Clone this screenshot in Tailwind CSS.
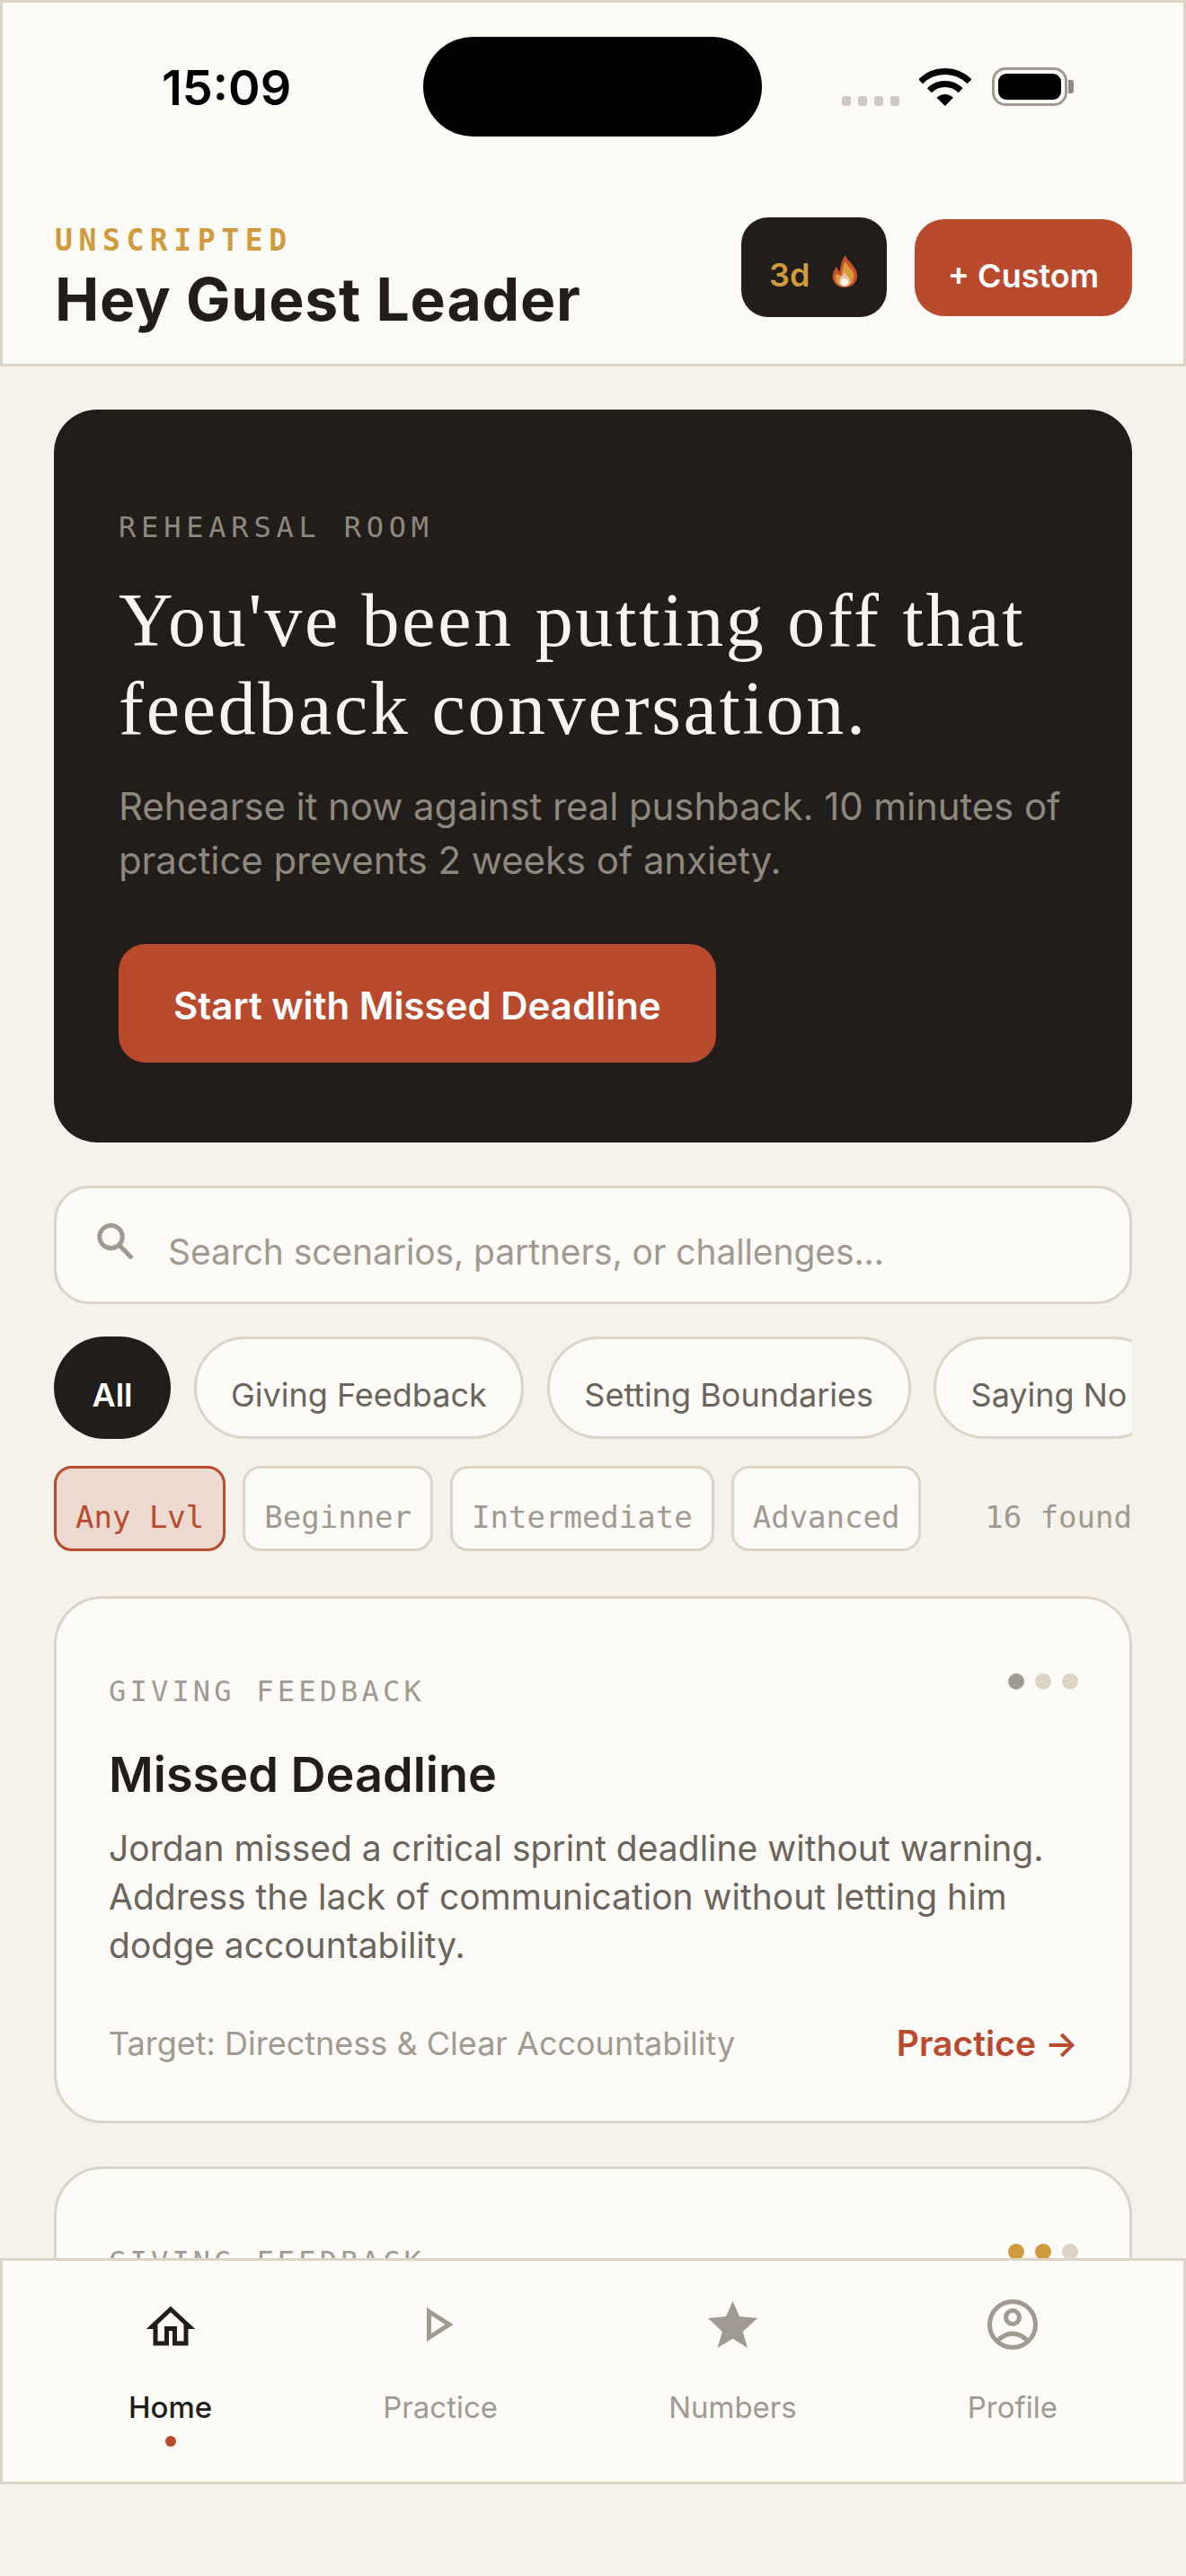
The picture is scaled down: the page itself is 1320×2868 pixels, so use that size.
<!doctype html>
<html lang="en">
<head>
    <meta charset="UTF-8">
    <meta name="viewport" content="width=device-width, initial-scale=1.0">
    <script src="https://cdn.jsdelivr.net/npm/@tailwindcss/browser@4"></script>
    <title>Unscripted</title>
</head>
<body class="bg-[#f5f1eb] font-['Inter',sans-serif]">
<div class="h-[2868px] flex flex-col overflow-hidden">
    <!-- status bar + greeting -->
    <header class="h-[408px] shrink-0 bg-[#fcfbf7] border-[3px] border-[#ddd3c7]">
        <div class="flex items-center pt-[38px] h-[149px]">
            <div class="ml-[177px] w-[291px] text-[54px] font-semibold text-black leading-none pt-[2px]">15:09</div>
            <div class="w-[377px] h-[111px] rounded-full bg-black"></div>
            <div class="ml-[89px] flex items-center">
                <div class="flex gap-[8px] self-end">
                    <span class="w-[10px] h-[11px] rounded-[3px] bg-[#cfc9c0]"></span>
                    <span class="w-[10px] h-[11px] rounded-[3px] bg-[#cfc9c0]"></span>
                    <span class="w-[10px] h-[11px] rounded-[3px] bg-[#cfc9c0]"></span>
                    <span class="w-[10px] h-[11px] rounded-[3px] bg-[#cfc9c0]"></span>
                </div>
                <svg class="ml-[22px]" width="58" height="42" viewBox="0 0 58 42" fill="none" stroke="#000" stroke-width="7">
                    <path d="M1.5 14.8A38.5 38.5 0 0 1 56 14.8"/>
                    <path d="M11.4 24.7A24.5 24.5 0 0 1 46.1 24.7"/>
                    <path d="M28.75 42L19.5 32.8A13 13 0 0 1 38 32.8Z" fill="#000" stroke="none"/>
                </svg>
                <div class="ml-[23px] flex items-center">
                    <div class="w-[84px] h-[43px] rounded-[15px] border-[3px] border-[#a09a90] p-[4px]">
                        <div class="w-full h-full rounded-[9px] bg-black"></div>
                    </div>
                    <div class="ml-[1px] w-[6px] h-[15px] rounded-r-[3px] bg-[#8f8a81]"></div>
                </div>
            </div>
        </div>
        <div class="flex items-start justify-between pl-[58px] pr-[57px] mt-[88px]">
            <div class="pt-[8px]">
                <div class="font-['DejaVu_Sans_Mono',monospace] font-bold text-[33px] leading-[40px] tracking-[6.6px] text-[#cf9b3d]">UNSCRIPTED</div>
                <h1 class="mt-[5px] text-[66px] leading-[80px] font-bold tracking-[0.8px] text-[#211d1a]">Hey Guest Leader</h1>
            </div>
            <div class="flex items-start gap-[31px]">
                <div class="mt-[2px] w-[162px] h-[111px] rounded-[30px] bg-[#211d1a] flex items-center pl-[31px] pt-[16px]">
                    <span class="text-[36px] font-semibold text-[#cf9b3d] leading-none">3d</span>
                    <svg class="ml-[25px] mt-[-8px]" width="29" height="36" viewBox="0 0 29 36">
                        <path d="M15 0C17 6 22 8 25 14C28 19 29 23 27 28C25 33 20 36 14 36C8 36 3 33 1 27C0 22 2 17 5 13C6 16 7 17 9 18C9 11 11 5 15 0Z" fill="#c9502b"/>
                        <path d="M15 7C17 12 22 15 24 20C25 25 23 30 20 33C17 35 11 35 8 33C4 30 3 25 5 21C7 22 9 23 11 23C11 17 12 12 15 7Z" fill="#d99a3c"/>
                        <path d="M14 19C16 22 20 25 20 29C20 33 17 35 14 35C11 35 8 33 8 29C8 25 12 23 14 19Z" fill="#eec2a8"/>
                        <circle cx="14" cy="30" r="4" fill="#fdf6ea"/>
                    </svg>
                </div>
                <button class="mt-[4px] w-[242px] h-[108px] rounded-[33px] bg-[#b94a2e] text-white text-[36px] font-semibold pt-[18px]">+ Custom</button>
            </div>
        </div>
    </header>

    <main class="flex-1 min-h-0 overflow-hidden px-[60px] pt-[48px]">
        <!-- rehearsal card -->
        <section class="h-[816px] rounded-[48px] bg-[#211d1a] px-[72px] pt-[109px]">
            <div class="font-['DejaVu_Sans_Mono',monospace] text-[32px] leading-[44px] tracking-[5.8px] text-[#8e887e]">REHEARSAL ROOM</div>
            <h2 class="mt-[33px] font-['Liberation_Serif',serif] text-[84px] leading-[97.5px] tracking-[2.7px] text-[#f8f5ee]">You've been putting off that feedback conversation.</h2>
            <p class="mt-[31px] text-[42px] leading-[60px] tracking-[-0.1px] text-[#8e887e]">Rehearse it now against real pushback. 10 minutes of practice prevents 2 weeks of anxiety.</p>
            <button class="mt-[63px] h-[132px] px-[61px] rounded-[30px] bg-[#b94a2e] text-white text-[42px] font-semibold pt-[4px]">Start with Missed Deadline</button>
        </section>

        <!-- search -->
        <div class="mt-[48px] h-[132px] rounded-[39px] border-[3px] border-[#ddd3c7] bg-[#fcfbf7] flex items-center pl-[45px]">
            <svg class="mt-[-8px]" width="41" height="40" viewBox="0 0 41 40" fill="none" stroke="#a09a90" stroke-width="5">
                <circle cx="15.5" cy="15" r="12.7"/>
                <path d="M25 24.5L39 39"/>
            </svg>
            <input class="ml-[38px] flex-1 h-full pt-[14px] bg-transparent outline-none text-[39px] tracking-[-0.1px] placeholder:text-[#a09a90]" placeholder="Search scenarios, partners, or challenges...">
        </div>

        <!-- category pills -->
        <div class="mt-[36px] flex gap-[25.5px] overflow-hidden text-[36px]">
            <button class="shrink-0 h-[114px] w-[130px] rounded-full bg-[#211d1a] text-white font-semibold pt-[16px]">All</button>
            <button class="shrink-0 h-[114px] px-[38.5px] rounded-full border-[3px] border-[#ddd3c7] bg-[#fcfbf7] text-[#6b645b] pt-[16px]">Giving Feedback</button>
            <button class="shrink-0 h-[114px] px-[38.5px] rounded-full border-[3px] border-[#ddd3c7] bg-[#fcfbf7] text-[#6b645b] pt-[16px]">Setting Boundaries</button>
            <button class="shrink-0 h-[114px] px-[38.5px] rounded-full border-[3px] border-[#ddd3c7] bg-[#fcfbf7] text-[#6b645b] pt-[16px]">Saying No</button>
        </div>

        <!-- level filters -->
        <div class="mt-[30px] flex items-center gap-[19px] font-['DejaVu_Sans_Mono',monospace] text-[34px] text-[#a09a90]">
            <button class="h-[95px] px-[21px] rounded-[20px] border-[3px] border-[#b94a2e] bg-[#ecd9d0] text-[#b94a2e] pt-[20px]">Any Lvl</button>
            <button class="h-[95px] px-[21px] rounded-[20px] border-[3px] border-[#ddd3c7] bg-[#fcfbf7] pt-[20px]">Beginner</button>
            <button class="h-[95px] px-[21px] rounded-[20px] border-[3px] border-[#ddd3c7] bg-[#fcfbf7] pt-[20px]">Intermediate</button>
            <button class="h-[95px] px-[21px] rounded-[20px] border-[3px] border-[#ddd3c7] bg-[#fcfbf7] pt-[20px]">Advanced</button>
            <span class="ml-auto pt-[20px]">16 found</span>
        </div>

        <!-- scenario cards -->
        <article class="mt-[50px] h-[587px] rounded-[54px] border-[3px] border-[#ddd3c7] bg-[#fcfbf7] pl-[58px] pr-[57px] pt-[85px]">
            <div class="flex items-start justify-between">
                <span class="font-['DejaVu_Sans_Mono',monospace] text-[32px] leading-[36px] tracking-[4.2px] text-[#a09a90]">GIVING FEEDBACK</span>
                <div class="flex gap-[12px] mt-[-2px]">
                    <span class="w-[18px] h-[18px] rounded-full bg-[#a09a90]"></span>
                    <span class="w-[18px] h-[18px] rounded-full bg-[#ddd3c7]"></span>
                    <span class="w-[18px] h-[18px] rounded-full bg-[#ddd3c7]"></span>
                </div>
            </div>
            <h3 class="mt-[42px] text-[54px] leading-[66px] font-semibold text-[#211d1a]">Missed Deadline</h3>
            <p class="mt-[22px] text-[39px] leading-[54px] text-[#6b645b]">Jordan missed a critical sprint deadline without warning. Address the lack of communication without letting him dodge accountability.</p>
            <div class="mt-[53px] flex items-center justify-between">
                <span class="text-[36px] text-[#a09a90]">Target: Directness &amp; Clear Accountability</span>
                <span class="text-[39px] font-semibold text-[#b94a2e]">Practice →</span>
            </div>
        </article>

        <article class="mt-[48px] h-[400px] rounded-[54px] border-[3px] border-[#ddd3c7] bg-[#fcfbf7] pl-[58px] pr-[57px] pt-[85px]">
            <div class="flex items-start justify-between">
                <span class="font-['DejaVu_Sans_Mono',monospace] text-[32px] leading-[36px] tracking-[4.2px] text-[#a09a90]">GIVING FEEDBACK</span>
                <div class="flex gap-[12px] mt-[-2px]">
                    <span class="w-[18px] h-[18px] rounded-full bg-[#cf9b3d]"></span>
                    <span class="w-[18px] h-[18px] rounded-full bg-[#cf9b3d]"></span>
                    <span class="w-[18px] h-[18px] rounded-full bg-[#ddd3c7]"></span>
                </div>
            </div>
        </article>
    </main>

    <!-- bottom nav -->
    <nav class="h-[252px] mb-[102px] shrink-0 bg-[#fcfbf7] border-[3px] border-[#ddd3c7] px-[45px] flex justify-around text-[33px] text-[#a09a90]">
        <a class="flex flex-col items-center pt-[43px] text-[#211d1a] font-medium">
            <svg class="h-[56px]" width="54" height="47" viewBox="0 0 54 47" fill="none" stroke="#211d1a" stroke-width="5">
                <path d="M27 6.5L48 26H44V44.5H31.5V28H22.5V44.5H10V26H6Z"/>
            </svg>
            <span class="mt-[44px] leading-[40px]">Home</span>
            <span class="mt-[12px] w-[12px] h-[12px] rounded-full bg-[#b94a2e]"></span>
        </a>
        <a class="flex flex-col items-center pt-[43px]">
            <svg class="h-[56px]" width="30" height="38" viewBox="0 0 30 38" fill="none" stroke="#a09a90" stroke-width="5">
                <path d="M2.5 4.5L25 19L2.5 33.5Z"/>
            </svg>
            <span class="mt-[44px] leading-[40px]">Practice</span>
        </a>
        <a class="flex flex-col items-center pt-[43px]">
            <svg class="h-[56px]" width="55" height="52" viewBox="0 0 55 52" fill="#a09a90">
                <path d="M27.5 0L35 17L55 19L38.7 34L44 52L27.5 41.7L10.5 52L16 34L0 19L20 17Z"/>
            </svg>
            <span class="mt-[44px] leading-[40px]">Numbers</span>
        </a>
        <a class="flex flex-col items-center pt-[43px]">
            <svg class="h-[56px]" width="56" height="56" viewBox="0 0 56 56" fill="none" stroke="#a09a90" stroke-width="5">
                <circle cx="28" cy="28" r="25.5"/>
                <circle cx="28" cy="20" r="7.5"/>
                <path d="M10 47Q28 29 46 47"/>
            </svg>
            <span class="mt-[44px] leading-[40px]">Profile</span>
        </a>
    </nav>
</div>
</body>
</html>
